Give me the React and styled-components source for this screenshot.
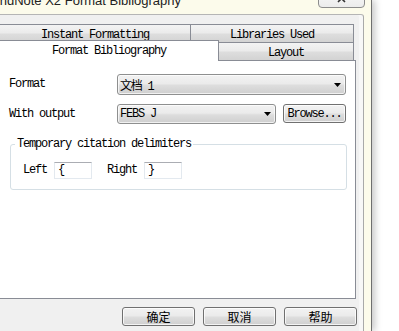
import React from 'react';
import styled, { createGlobalStyle } from 'styled-components';

const mono = `"Liberation Mono", "DejaVu Sans Mono", "Noto Sans CJK SC", monospace`;
const cjk = `"Noto Sans CJK SC", "Liberation Sans", sans-serif`;

const GlobalStyle = createGlobalStyle`
  html, body {
    margin: 0;
    padding: 0;
    background: #fff;
  }
  body {
    width: 399px;
    height: 331px;
    overflow: hidden;
    font-family: ${mono};
    font-size: 12px;
    color: #000;
  }
`;

const Window = styled.div`
  width: 371px;
  height: 331px;
  background: #fcfbeb;
  border-right: 1px solid #6f6f6f;
  box-shadow: 3px 0 7px rgba(0, 0, 0, 0.22);
  display: flex;
  flex-direction: column;
  overflow: hidden;
`;

const TitleBar = styled.div`
  height: 14px;
  flex: none;
  display: flex;
  justify-content: space-between;
  align-items: flex-start;
  overflow: hidden;
`;

const TitleText = styled.div`
  font-family: "Liberation Sans", Arial, sans-serif;
  font-size: 13px;
  line-height: 13px;
  margin-top: -6px;
  text-indent: -9px;
  color: #222;
  white-space: nowrap;
`;

const CloseButton = styled.div`
  width: 45px;
  height: 17px;
  margin-top: -12px;
  margin-right: 6px;
  border: 1px solid #8c8c8c;
  border-radius: 0 0 4px 4px;
  background: linear-gradient(#fafafa, #ececec);
  display: flex;
  align-items: center;
  justify-content: center;
  padding-top: 1px;
  box-sizing: content-box;
`;

const Client = styled.div`
  flex: 1;
  margin-right: 7px;
  background: #f0f0f0;
  border-top: 1px solid #b5b5b5;
  border-right: 1px solid #a9a9a9;
  border-top-right-radius: 3px;
  box-shadow: inset -4px 0 0 #f7f7f7;
  padding: 9px 7px 0 0;
  display: flex;
  flex-direction: column;
`;

const TabRow = styled.div`
  display: flex;
  align-items: flex-end;
  height: 18px;
`;

const Tab = styled.div`
  box-sizing: border-box;
  width: ${(p) => p.$w}px;
  height: ${(p) => (p.$active ? 21 : 18)}px;
  margin-bottom: ${(p) => (p.$active ? -1 : 0)}px;
  position: relative;
  z-index: ${(p) => (p.$active ? 1 : 0)};
  border-top: 1px solid #898c95;
  border-right: 1px solid #898c95;
  background: ${(p) =>
    p.$active ? '#fff' : 'linear-gradient(#f3f3f3, #ebebeb 45%, #dddddd 55%, #d3d3d3)'};
  display: flex;
  align-items: center;
  justify-content: center;
  padding-top: ${(p) => (p.$active ? 0 : 2)}px;
  letter-spacing: -1.2px;
  white-space: nowrap;
`;

const Panel = styled.div`
  box-sizing: border-box;
  width: 356px;
  height: 239px;
  background: #fff;
  border: 1px solid #898c95;
  border-left: none;
  padding: 13px 9px 0 9px;
  display: flex;
  flex-direction: column;
  gap: 9px;
`;

const FieldRow = styled.div`
  display: flex;
  align-items: flex-start;
  gap: 7px;
`;

const Label = styled.div`
  width: ${(p) => p.$w || 101}px;
  flex: none;
  height: ${(p) => p.$h || 21}px;
  line-height: ${(p) => p.$h || 21}px;
  letter-spacing: -1.2px;
  white-space: nowrap;
`;

const Combo = styled.div`
  box-sizing: border-box;
  width: ${(p) => p.$w}px;
  height: ${(p) => p.$h}px;
  border: 1px solid #8e8f8f;
  border-radius: 3px;
  background: linear-gradient(#f2f2f2, #ebebeb 45%, #dddddd 55%, #cfcfcf);
  box-shadow: inset 0 0 0 1px rgba(255, 255, 255, 0.7);
  display: flex;
  align-items: center;
  justify-content: space-between;
  padding: 0 4px 0 2px;
`;

const ComboText = styled.span`
  letter-spacing: -1.2px;
  white-space: nowrap;
  font-family: ${mono};
`;

const Button = styled.button`
  box-sizing: border-box;
  width: ${(p) => p.$w}px;
  height: ${(p) => p.$h || 19}px;
  padding: 0;
  margin: 0;
  border: 1px solid #707070;
  border-radius: 3px;
  background: linear-gradient(#f2f2f2, #ebebeb 45%, #dddddd 55%, #cfcfcf);
  box-shadow: inset 0 0 0 1px rgba(255, 255, 255, 0.75);
  font-family: ${(p) => (p.$cjk ? cjk : mono)};
  font-size: 12px;
  letter-spacing: ${(p) => (p.$cjk ? '0' : '-1.2px')};
  color: #000;
  line-height: 1;
  display: flex;
  align-items: center;
  justify-content: center;
`;

const Group = styled.fieldset`
  box-sizing: border-box;
  width: 337px;
  margin: 5px 0 0 1px;
  padding: 0 0 10px 0;
  border: 1px solid #d5dfe5;
  border-radius: 3px;
  min-width: 0;
`;

const Legend = styled.legend`
  margin-left: 4px;
  padding: 0 2px;
  font-size: 12px;
  line-height: 13px;
  letter-spacing: -1.2px;
  white-space: nowrap;
`;

const DelimRow = styled.div`
  display: flex;
  align-items: center;
  margin-top: 11px;
  padding-left: 12px;
`;

const DelimInput = styled.div`
  box-sizing: border-box;
  width: 38px;
  height: 17px;
  border: 1px solid #e3e9ef;
  border-top-color: #abadb3;
  background: #fff;
  line-height: 15px;
  padding-left: 3px;
  margin: 0 15px 0 7px;
`;

const ButtonRow = styled.div`
  display: flex;
  justify-content: flex-end;
  gap: 8px;
  margin: 8px -1px 0 0;
`;

const Arrow = () => (
  <svg width="7" height="4" viewBox="0 0 7 4">
    <path d="M0 0 H7 L3.5 4 Z" fill="#000" />
  </svg>
);

export default function App() {
  return (
    <>
      <GlobalStyle />
      <Window>
        <TitleBar>
          <TitleText>EndNote X2 Format Bibliography</TitleText>
          <CloseButton>
            <svg width="9" height="8" viewBox="0 0 9 8">
              <path d="M1 0 L8 7 M8 0 L1 7" stroke="#333" strokeWidth="1.6" />
            </svg>
          </CloseButton>
        </TitleBar>
        <Client>
          <TabRow>
            <Tab $w={191}>Instant Formatting</Tab>
            <Tab $w={163}>Libraries Used</Tab>
          </TabRow>
          <TabRow>
            <Tab $w={219} $active>Format Bibliography</Tab>
            <Tab $w={135}>Layout</Tab>
          </TabRow>
          <Panel>
            <FieldRow>
              <Label>Format</Label>
              <Combo $w={236} $h={21}>
                <ComboText>文档 1</ComboText>
                <Arrow />
              </Combo>
            </FieldRow>
            <FieldRow>
              <Label $h={20}>With output</Label>
              <Combo $w={164} $h={20}>
                <ComboText>FEBS J</ComboText>
                <Arrow />
              </Combo>
              <Button $w={65}>Browse...</Button>
            </FieldRow>
            <Group>
              <Legend>Temporary citation delimiters</Legend>
              <DelimRow>
                <Label $w={24} $h={17}>Left</Label>
                <DelimInput>{'{'}</DelimInput>
                <Label $w={30} $h={17}>Right</Label>
                <DelimInput>{'}'}</DelimInput>
              </DelimRow>
            </Group>
          </Panel>
          <ButtonRow>
            <Button $w={73} $cjk>确定</Button>
            <Button $w={73} $cjk>取消</Button>
            <Button $w={73} $cjk>帮助</Button>
          </ButtonRow>
        </Client>
      </Window>
    </>
  );
}
